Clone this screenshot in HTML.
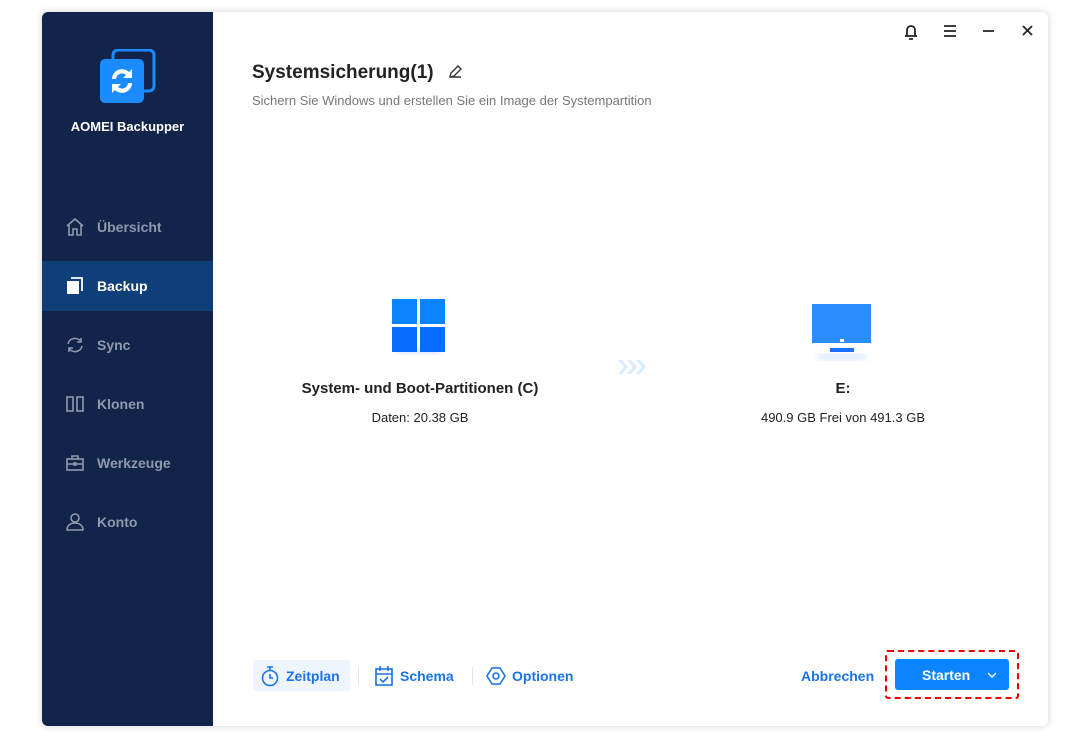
<!DOCTYPE html>
<html><head><meta charset="utf-8"><style>
*{margin:0;padding:0;box-sizing:border-box}
body{width:1092px;height:736px;background:#fff;font-family:"Liberation Sans",sans-serif;position:relative;overflow:hidden}
.win{position:absolute;left:42px;top:12px;width:1006px;height:714px;background:#fff;border-radius:6px;box-shadow:0 0 8px rgba(0,0,0,.18);overflow:hidden}
.side{position:absolute;left:0;top:0;width:171px;height:714px;background:#13244a}
.logo{position:absolute;left:58px;top:37px}
.brand{position:absolute;left:0;width:171px;top:107px;text-align:center;color:#fff;font-weight:bold;font-size:13px}
.nav{position:absolute;left:0;width:171px;height:50px;display:flex;align-items:center;color:#8f99ad;font-size:14px;font-weight:bold}
.nav svg{position:absolute;left:23px}
.nav span{position:absolute;left:55px}
.nav.act{background:#0f3f78;color:#fff}
.t{position:absolute;color:#222}
.btm{position:absolute;font-size:14px;font-weight:bold;color:#1a73e8;display:flex;align-items:center}
</style></head><body>
<div class="win">
<div class="side">
 <svg class="logo" width="56" height="56" viewBox="0 0 56 56"><rect x="13" y="1" width="41" height="41" rx="5" fill="none" stroke="#1a8cff" stroke-width="3"/><rect x="0" y="10" width="44" height="44" rx="5" fill="#1a8cff"/><path d="M12 30a10 10 0 0 1 17-7l3-3v9h-9l3-3a6 6 0 0 0-10 4z" fill="#fff"/><path d="M32 34a10 10 0 0 1-17 7l-3 3v-9h9l-3 3a6 6 0 0 0 10-4z" fill="#fff"/></svg>
 <div class="brand">AOMEI Backupper</div>
 <div class="nav" style="top:190px"><svg width="20" height="20" viewBox="0 0 20 20" fill="none" stroke="#8f99ad" stroke-width="1.6"><path d="M2 9l8-7 8 7M4 8v10h4v-6h4v6h4V8"/></svg><span>Übersicht</span></div>
 <div class="nav act" style="top:249px"><svg width="20" height="20" viewBox="0 0 20 20"><rect x="2" y="5" width="12" height="13" fill="#fff"/><path d="M6 2h11v13" fill="none" stroke="#fff" stroke-width="1.8"/></svg><span>Backup</span></div>
 <div class="nav" style="top:308px"><svg width="20" height="20" viewBox="0 0 20 20" fill="none" stroke="#8f99ad" stroke-width="1.6"><path d="M3 9a7 7 0 0 1 13-2M17 11a7 7 0 0 1-13 2"/><path d="M16 3v4h-4M4 17v-4h4"/></svg><span>Sync</span></div>
 <div class="nav" style="top:367px"><svg width="20" height="20" viewBox="0 0 20 20" fill="none" stroke="#8f99ad" stroke-width="1.6"><rect x="2" y="3" width="6" height="14"/><rect x="12" y="3" width="6" height="14"/></svg><span>Klonen</span></div>
 <div class="nav" style="top:426px"><svg width="20" height="20" viewBox="0 0 20 20" fill="none" stroke="#8f99ad" stroke-width="1.6"><rect x="2" y="6" width="16" height="11"/><path d="M7 6V3h6v3M2 11h16M9 10h2v2H9z"/></svg><span>Werkzeuge</span></div>
 <div class="nav" style="top:485px"><svg width="20" height="20" viewBox="0 0 20 20" fill="none" stroke="#8f99ad" stroke-width="1.6"><circle cx="10" cy="6" r="4"/><path d="M2 18c0-5 4-7 8-7s8 2 8 7z"/></svg><span>Konto</span></div>
</div>
<svg style="position:absolute;left:860px;top:10px" width="140" height="20" viewBox="0 0 140 20" fill="none" stroke="#222" stroke-width="1.8"><path d="M3 14h12M5 14V8a4 4 0 0 1 8 0v6M7 17h4"/><path d="M42 4h12M42 9h12M42 14h12"/><path d="M81 9h11"/><path d="M121 4l9 9M130 4l-9 9"/></svg>
<div class="t" style="left:210px;top:50px;font-size:19px;font-weight:bold">Systemsicherung(1)</div>
<svg style="position:absolute;left:405px;top:52px" width="16" height="16" viewBox="0 0 16 16" fill="none" stroke="#333" stroke-width="1.4"><path d="M3 13l1-4 7-7 3 3-7 7zM3 13h11"/></svg>
<div class="t" style="left:210px;top:81px;font-size:13px;color:#777">Sichern Sie Windows und erstellen Sie ein Image der Systempartition</div>
<svg style="position:absolute;left:349px;top:286px" width="56" height="64"><defs><filter id="b"><feGaussianBlur stdDeviation="3"/></filter></defs><rect x="4" y="50" width="46" height="6" fill="#dce9ff" filter="url(#b)"/><rect x="1" y="1" width="25" height="25" fill="#0a84ff"/><rect x="29" y="1" width="25" height="25" fill="#0a84ff"/><rect x="1" y="29" width="25" height="25" fill="#0a6cff"/><rect x="29" y="29" width="25" height="25" fill="#0a6cff"/></svg>
<svg style="position:absolute;left:575px;top:347px" width="30" height="16" fill="#d8ebff"><path d="M1 1h4l6 7-6 7H1l6-7zM10 1h4l6 7-6 7h-4l6-7zM19 1h4l6 7-6 7h-4l6-7z"/></svg>
<svg style="position:absolute;left:768px;top:292px" width="64" height="62"><rect x="8" y="50" width="48" height="6" fill="#dce9ff" filter="url(#b)"/><rect x="2" y="0" width="59" height="39" fill="#2a8cff"/><rect x="30" y="35" width="4" height="3" fill="#fff"/><rect x="20" y="44" width="24" height="4" fill="#1a6fff"/></svg>
<div class="t" style="left:200px;width:356px;text-align:center;top:368px;font-size:15px;font-weight:bold">System- und Boot-Partitionen (C)</div>
<div class="t" style="left:200px;width:356px;text-align:center;top:398px;font-size:13px">Daten: 20.38 GB</div>
<div class="t" style="left:620px;width:362px;text-align:center;top:368px;font-size:15px;font-weight:bold">E:</div>
<div class="t" style="left:620px;width:362px;text-align:center;top:398px;font-size:13px">490.9 GB Frei von 491.3 GB</div>
<div style="position:absolute;left:211px;top:648px;width:97px;height:31px;background:#eef5ff;border-radius:3px"></div>
<div class="btm" style="left:218px;top:653px"><svg width="20" height="22" viewBox="0 0 20 22" fill="none" stroke="#1a73e8" stroke-width="1.6"><circle cx="10" cy="13" r="7.5"/><path d="M7 2h6M10 2v3M10 9v4h3"/></svg><span style="margin-left:6px">Zeitplan</span></div>
<div style="position:absolute;left:316px;top:655px;width:1px;height:18px;background:#e5e5e5"></div>
<div class="btm" style="left:332px;top:653px"><svg width="20" height="22" viewBox="0 0 20 22" fill="none" stroke="#1a73e8" stroke-width="1.6"><rect x="2" y="4" width="16" height="16"/><path d="M2 9h16M6 1v5M14 1v5M6 14l3 3 5-5"/></svg><span style="margin-left:6px">Schema</span></div>
<div style="position:absolute;left:430px;top:655px;width:1px;height:18px;background:#e5e5e5"></div>
<div class="btm" style="left:444px;top:653px"><svg width="20" height="22" viewBox="0 0 20 22" fill="none" stroke="#1a73e8" stroke-width="1.6"><path d="M6 3h8l5 8-5 8H6l-5-8z"/><circle cx="10" cy="11" r="3"/></svg><span style="margin-left:6px">Optionen</span></div>
<div class="btm" style="left:759px;top:656px">Abbrechen</div>
<div style="position:absolute;left:843px;top:638px;width:134px;height:49px;border:2px dashed #e00;border-radius:3px"></div>
<div style="position:absolute;left:853px;top:647px;width:114px;height:31px;background:#0a84ff;border-radius:3px;color:#fff;font-weight:bold;font-size:14px"><span style="position:absolute;left:27px;top:8px">Starten</span><svg style="position:absolute;left:92px;top:12px" width="10" height="8" fill="none" stroke="#fff" stroke-width="1.4"><path d="M1 2l4 4 4-4"/></svg></div>
</div>
</body></html>
